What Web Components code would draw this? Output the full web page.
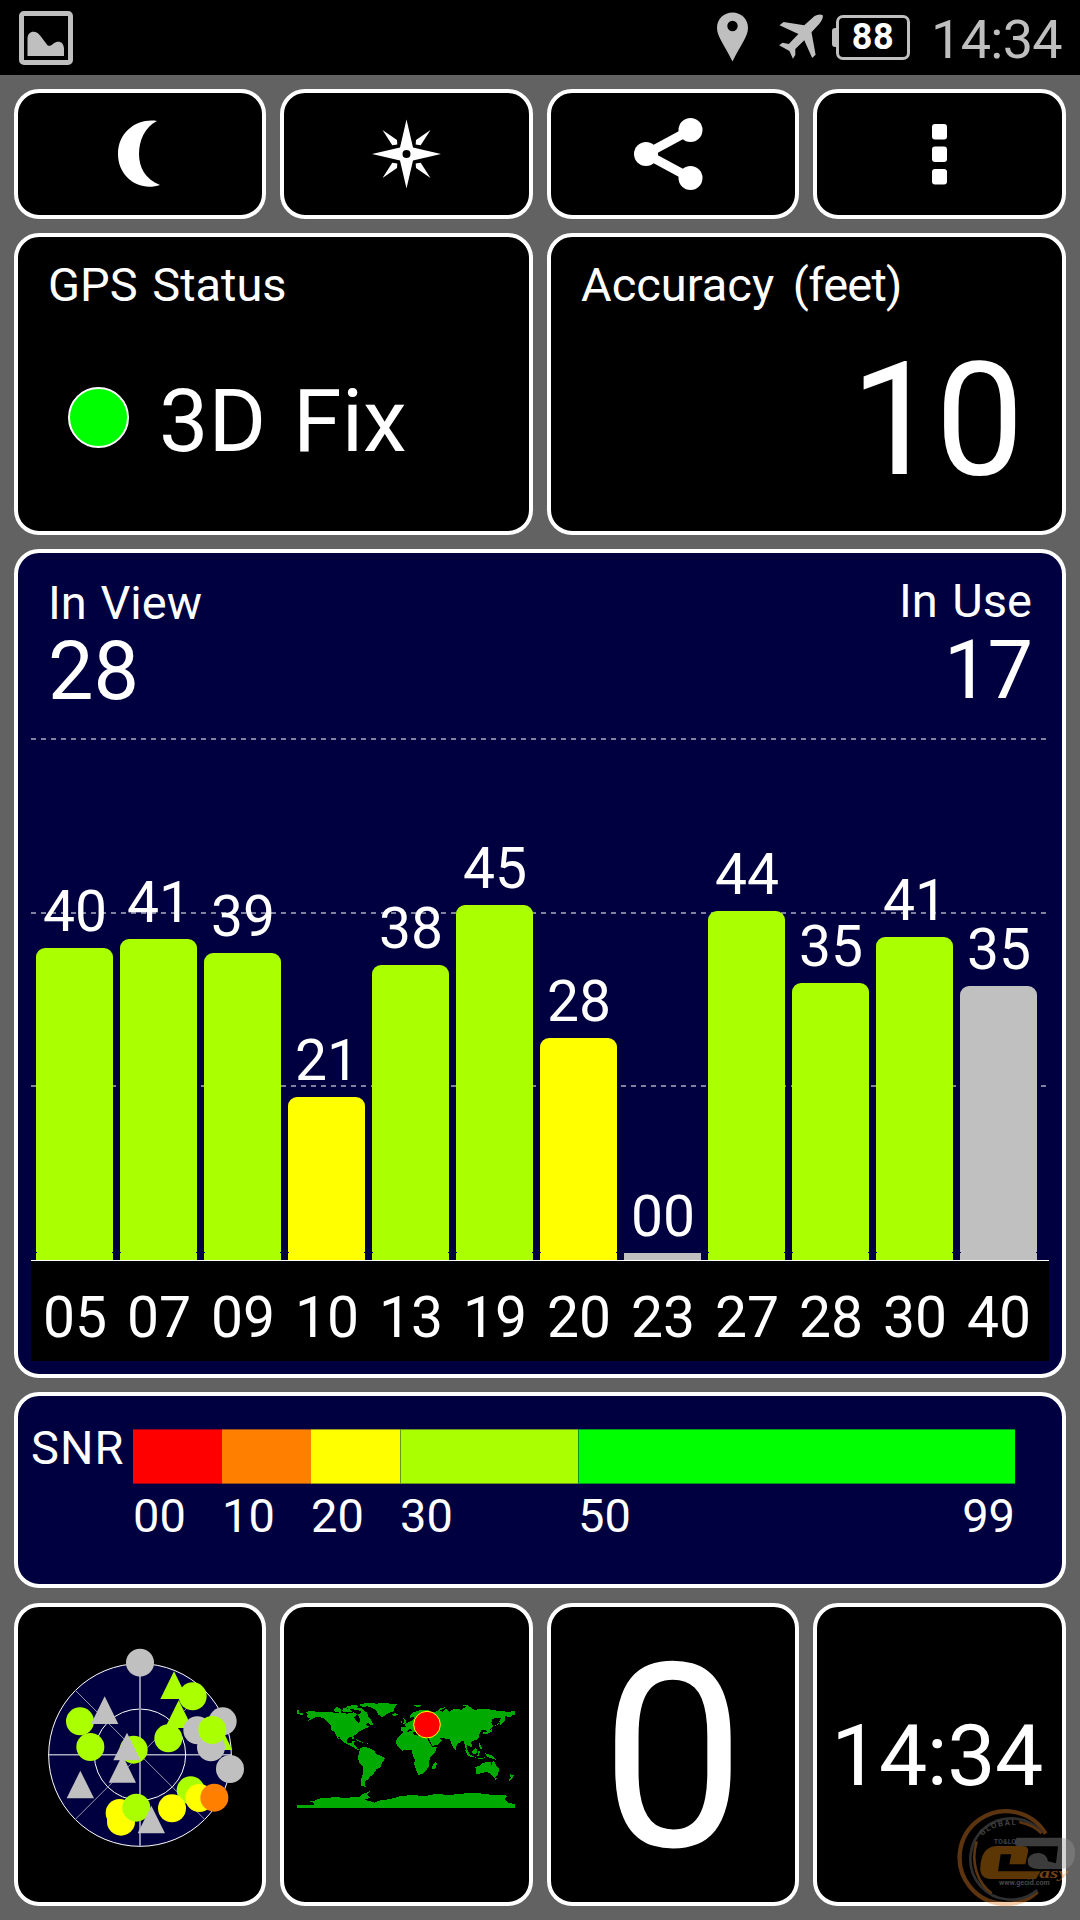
<!DOCTYPE html>
<html lang="en">
<head>
<meta charset="utf-8">
<title>GPS Test</title>
<style>
  body {
    margin: 0;
    width: 1080px;
    height: 1920px;
    overflow: hidden;
    background: #626262;
    color: #fff;
    font-family: Roboto, "Liberation Sans", sans-serif;
  }
</style>
</head>
<body>
<gps-app></gps-app>

<script>
class StatusBar extends HTMLElement {
  connectedCallback() {
    this.attachShadow({ mode: 'open' });
    this.shadowRoot.innerHTML = `
      <style>
        :host {
          display: flex;
          align-items: flex-start;
          height: 75px;
          box-sizing: border-box;
          padding: 11px 18px 0 19px;
          background: #000;
          color: #bfbfbf;
        }
        svg { display: block; }
        .spacer { flex: 1; }
        .pin { margin: 1px 27px 0 0; }
        .plane { margin: -1px 4px 0 0; }
        .battery {
          display: flex;
          align-items: center;
          margin-top: 4px;
        }
        .nub {
          width: 4px;
          height: 19px;
          margin-top: -1px;
          border-radius: 3px 0 0 3px;
          background: #bfbfbf;
        }
        .level {
          width: 74px;
          height: 45px;
          box-sizing: border-box;
          border: 3px solid #bfbfbf;
          border-radius: 7px;
          color: #fff;
          font-size: 36px;
          font-weight: 700;
          letter-spacing: .5px;
          line-height: 39px;
          text-align: center;
        }
        .time {
          margin-left: 21px;
          font-size: 54px;
          letter-spacing: -.7px;
          line-height: 54px;
          margin-top: 2px;
        }
      </style>
      <svg width="54" height="54" viewBox="0 0 54 54">
        <rect x="2.5" y="2.5" width="49" height="49" rx="2.5" fill="none" stroke="#bfbfbf" stroke-width="5"/>
        <path fill="#bfbfbf" d="M8.500 45V28c0-9 9-9 13-3l6 8c2 3 4 2 7-.5c4-3 10-2.500 10.500 5V45z"/>
      </svg>
      <div class="spacer"></div>
      <svg class="pin" width="31" height="50" viewBox="0 0 31 50">
        <path fill="#bfbfbf" fill-rule="evenodd" d="M15.500 .5C7 .5 0 7 0 15.800C0 25 7.500 33 15.500 49.500C23.500 33 31 25 31 15.800C31 7 24 .5 15.500 .5zM15.500 8.800a5.200 5.200 0 1 1 0 10.400a5.200 5.200 0 1 1 0-10.400z"/>
      </svg>
      <svg class="plane" width="53" height="52" viewBox="680 30 154 156" preserveAspectRatio="none">
        <path fill="#bfbfbf" d="M819 46q2 10-10 25l-23 26l12 67l-10 10l-23-53l-26 26l0 18l-7 11l-10-23l-30-17l10-8l18 4l28-30l-55-26l12-10l60 10l30-28q14-8 24-2z"/>
      </svg>
      <div class="battery"><div class="nub"></div><div class="level">88</div></div>
      <div class="time">14:34</div>
    `;
  }
}
customElements.define('status-bar', StatusBar);

class GpsPanel extends HTMLElement {
  connectedCallback() {
    this.attachShadow({ mode: 'open' });
    this.shadowRoot.innerHTML = `
      <style>
        :host {
          display: flex;
          flex-direction: column;
          min-width: 0;
          box-sizing: border-box;
          border: 4px solid #fff;
          border-radius: 25px;
          background: #000;
        }
        :host([navy]) { background: #000040; }
        :host([center]) {
          align-items: center;
          justify-content: center;
        }
      </style>
      <slot></slot>
    `;
  }
}
customElements.define('gps-panel', GpsPanel);

class ToolIcon extends HTMLElement {
  connectedCallback() {
    const icons = {
      moon: '<path d="M17-33C-2-36-22-23-22 0C-22 23-1 38 20 31C5 25-1 13-1 0C-1-14 5-27 17-33z"/>',
      compass: `
        <g transform="translate(-.5 0)">
          <path fill-rule="evenodd" d="M0-34.500L6.500-6.500L34.500 0L6.500 6.500L0 34.500L-6.500 6.500L-34.500 0L-6.500-6.500zM0-4a4 4 0 1 0 0 8a4 4 0 1 0 0-8z"/>
          <path d="M-24-24l14.500 10l.3 4.500l-5 .8zM24-24l-14.500 10l-.3 4.500l5 .8zM-24 24l14.500-10l.3-4.500l-5-.8zM24 24l-14.500-10l-.3-4.500l5-.8z"/>
        </g>`,
      share: `
        <path d="M17.500-24L-27 0L17.500 24" fill="none" stroke="#fff" stroke-width="9"/>
        <circle cx="-27" r="12"/><circle cx="17.500" cy="-24" r="12"/><circle cx="17.500" cy="24" r="12"/>`,
      menu: `
        <rect x="-8" y="-30" width="15" height="15.500" rx="3"/>
        <rect x="-8" y="-7.500" width="15" height="15.500" rx="3"/>
        <rect x="-8" y="15" width="15" height="15.500" rx="3"/>`
    };
    this.attachShadow({ mode: 'open' });
    this.shadowRoot.innerHTML = `
      <style>
        :host { display: block; }
        svg { display: block; }
      </style>
      <svg width="80" height="80" viewBox="-40 -40 80 80" fill="#fff">${icons[this.getAttribute('name')]}</svg>
    `;
  }
}
customElements.define('tool-icon', ToolIcon);

class SignalChart extends HTMLElement {
  connectedCallback() {
    const green = '#aaff00', yellow = '#ffff00', gray = '#c0c0c0';
    // id, signal, bar height, colour
    const sats = [
      ['05', '40', 312, green], ['07', '41', 321, green], ['09', '39', 307, green],
      ['10', '21', 163, yellow], ['13', '38', 295, green], ['19', '45', 355, green],
      ['20', '28', 222, yellow], ['23', '00', 7, gray], ['27', '44', 349, green],
      ['28', '35', 277, green], ['30', '41', 323, green], ['40', '35', 274, gray]
    ];
    this.attachShadow({ mode: 'open' });
    this.shadowRoot.innerHTML = `
      <style>
        :host {
          display: block;
          width: 1018px;
          font-size: 57px;
          line-height: 57px;
          text-align: center;
        }
        .plot, .ids {
          display: grid;
          grid-template-columns: repeat(12, 77px);
          column-gap: 7px;
          padding-left: 5px;
        }
        .plot {
          --dash: repeating-linear-gradient(90deg, #8080a0 0 5px, transparent 5px 10px);
          height: 522px;
          align-items: end;
          background:
            var(--dash) 0 0 / 1015px 2px no-repeat,
            var(--dash) 0 174px / 1015px 2px no-repeat,
            var(--dash) 0 347px / 1015px 2px no-repeat;
        }
        .value { margin-bottom: 8px; }
        .value, .ids span { padding-left: 1px; }
        .bar {
          border-radius: 9px 9px 0 0;
          display: flex;
          flex-direction: column;
          justify-content: flex-end;
        }
        .bar.empty { border-radius: 0; }
        .bar i {
          height: 1px;
          margin-bottom: 7px;
          border: solid #000040;
          border-width: 0 1px;
        }
        .bar.empty i { display: none; }
        .ids {
          height: 100px;
          box-sizing: border-box;
          padding-top: 28px;
          background: #000;
        }
        .axis { height: 1px; background: #fff; }
      </style>
      <div class="plot">
        ${sats.map(s => `
          <div class="col">
            <div class="value">${s[1]}</div>
            <div class="bar${s[1] === '00' ? ' empty' : ''}" style="height:${s[2]}px;background:${s[3]}"><i></i></div>
          </div>`).join('')}
      </div>
      <div class="axis"></div>
      <div class="ids">${sats.map(s => `<span>${s[0]}</span>`).join('')}</div>
    `;
  }
}
customElements.define('signal-chart', SignalChart);

class SnrScale extends HTMLElement {
  connectedCallback() {
    this.attachShadow({ mode: 'open' });
    this.shadowRoot.innerHTML = `
      <style>
        :host {
          display: grid;
          grid-template-columns: 102px 89px 89px 89px 178px 338px 99px;
          padding: 33px 0 0 13px;
          font-size: 47px;
          line-height: 47px;
        }
        .seg {
          height: 55px;
          box-sizing: border-box;
          border: solid rgba(0, 0, 64, .4);
          border-width: 1px 0 1px 0;
        }
        .green { border-left-width: 1px; }
        .name {
          margin-top: -5px;
          letter-spacing: 1px;
        }
        .num { padding-top: 8px; }
        .last { text-align: right; margin-left: -99px; }
      </style>
      <div class="name">SNR</div>
      <div class="seg" style="background:#f00"></div>
      <div class="seg" style="background:#ff8000"></div>
      <div class="seg" style="background:#ff0"></div>
      <div class="seg green" style="background:#af0"></div>
      <div class="seg green" style="background:#0f0;grid-column:span 2"></div>
      <div></div>
      <div class="num">00</div>
      <div class="num">10</div>
      <div class="num">20</div>
      <div class="num">30</div>
      <div class="num">50</div>
      <div class="num last">99</div>
    `;
  }
}
customElements.define('snr-scale', SnrScale);

class SkyView extends HTMLElement {
  connectedCallback() {
    const colors = { g: '#aaff00', y: '#ffff00', o: '#ff8000', x: '#c0c0c0' };
    // shape, colour, x, y: circles by centre, triangles by apex
    const marks = [
      ['c', 'x', 330, 187], ['t', 'g', 432, 213], ['c', 'g', 488, 288], ['t', 'g', 446, 300],
      ['c', 'g', 415, 414], ['c', 'g', 150, 363], ['c', 'g', 181, 440], ['t', 'x', 224, 288],
      ['c', 'g', 311, 448], ['t', 'x', 277, 464], ['t', 'x', 291, 397], ['t', 'x', 151, 511],
      ['c', 'x', 578, 363], ['t', 'g', 566, 366], ['c', 'x', 502, 390], ['c', 'x', 543, 441],
      ['c', 'g', 547, 389], ['c', 'x', 600, 506], ['c', 'g', 482, 570], ['c', 'y', 508, 593],
      ['c', 'o', 553, 592], ['c', 'y', 426, 624], ['c', 'y', 269, 638], ['c', 'y', 273, 664],
      ['c', 'g', 319, 622], ['t', 'x', 364, 616]
    ];
    const shapes = marks.map(([s, c, x, y]) => s === 'c'
      ? `<circle cx="${x}" cy="${y}" r="42" fill="${colors[c]}"/>`
      : `<path d="M${x} ${y}l41 83h-82z" fill="${colors[c]}"/>`).join('');
    this.attachShadow({ mode: 'open' });
    this.shadowRoot.innerHTML = `
      <style>
        :host { display: block; }
        svg { display: block; }
      </style>
      <svg width="230" height="220" viewBox="-15 134 690 660" fill="none">
        <circle cx="330" cy="464" r="274" fill="#000040" stroke="#fff" stroke-width="3"/>
        <circle cx="330" cy="463" r="137" stroke="#fff" stroke-width="3"/>
        <path d="M136 270L524 657M524 270L136 657" stroke="#9696ac" stroke-width="3"/>
        <path d="M330 190V738" stroke="#8c8ca8" stroke-width="6"/>
        <path d="M56 463.500H604" stroke="#fff" stroke-width="3"/>
        ${shapes}
      </svg>
    `;
  }
}
customElements.define('sky-view', SkyView);

class WorldMap extends HTMLElement {
  connectedCallback() {
    this.attachShadow({ mode: 'open' });
    this.shadowRoot.innerHTML = `
      <style>
        :host { display: block; margin-right: 1px; }
        svg { display: block; }
      </style>
      <svg width="218" height="106" viewBox="51 67 654 318">
        <g fill="#00aa00" shape-rendering="crispEdges">
          <path d="M51 92l5 0l2 7l10 2l0 4l-17-1zM78 97L90 94L120 97L150 96L165 100L180 98L200 102L222 98L232 104L222 112L226 122L236 132L241 124L238 112L234 105L250 93L260 98L266 112L272 118L280 136L272 138L264 130L256 134L268 142L256 146L243 152L232 160L220 170L224 179L218 178L214 171L205 174L200 182L203 190L213 191L218 183L225 184L220 196L228 198L232 207L240 208L234 212L222 204L208 196L196 191L186 184L178 172L174 172L180 184L172 176L164 158L154 150L152 136L140 124L128 114L108 112L98 118L82 124L92 116L80 112L84 104z"/>
          <path d="M160 90l10-8l14 6l-2 8l-18 0zM186 92l6-8l16 4l8 8l-24 2zM196 82l24-6l16 2l-6 6l-24 4zM214 88l10-6l20 4l10 10l10 8l-12-2l-16-10zM236 76l22-6l30 0l-16 8l-24 4z"/>
          <path d="M262 80L280 73L318 69L328 72L352 74L344 82L340 95L322 102L307 112L296 106L288 92L276 84zM336 102l12-1l6 3l-8 4l-8 0z"/>
          <path d="M225 178l12 4l10 6l-10-2zM246 188l10 2l-8 2zM262 190l6 4l-6-1z"/>
          <path d="M240 206L252 200L268 206L282 212L290 224L305 230L316 236L306 250L302 262L288 270L280 284L268 292L264 300L256 304L254 314L258 322L244 318L242 306L246 290L250 276L249 262L238 248L232 232L237 222z"/>
          <path d="M370 158L396 154L400 164L412 168L426 166L440 172L450 192L458 203L472 201L464 218L450 234L447 250L446 260L438 272L430 282L416 286L410 276L403 256L404 240L398 226L396 212L384 210L366 213L354 202L348 192L350 178L362 166zM466 246l5 6l-6 16l-7 2l-2-10z"/>
          <path d="M363 154L364 142L378 143L374 134L386 128L400 120L402 112L390 114L388 108L400 98L418 92L440 90L460 98L472 94L490 96L498 86L508 96L520 88L545 90L552 84L570 82L582 90L620 88L650 93L680 96L704 95L705 106L696 106L692 112L676 110L674 122L662 136L658 124L664 114L650 114L636 118L634 130L640 140L628 150L630 158L622 158L616 150L604 152L598 164L598 174L590 180L580 183L574 188L576 204L568 200L562 196L560 204L565 216L560 212L555 200L552 184L542 186L530 196L526 209L520 206L514 192L510 178L498 177L480 175L486 184L476 194L458 199L450 186L446 172L430 164L404 156L398 158L392 148L384 150L380 158z"/>
          <path d="M370 116l6 4l4 10l-12 4l4-8zM362 124l6 0l-4 7zM400 76l16-1l10 4l-12 4zM468 98l12-12l18-4l-16 10zM545 76l16 0l10 6l-16-2zM640 140l6-4l4-8l-2 12zM610 158l12-2l10-4l2-8l2 12l-12 6l-14 2zM650 134l8-6l-4 8zM670 122l3-2l-1 4z"/>
          <path d="M554 209l8 4l8 12l14 6l-4 2l-16-4zM576 214l12-10l4 8l-4 12l-10-2zM594 216l6-2l-4 16l-4-2zM596 188l4 4l4 10l6 8l-8-2l-4-8zM584 233l20 2l12-2l-14 6zM614 220l10 4l12 4l12 12l-14-4l-12-4zM526 202l3 7l-3 1z"/>
          <path d="M586 262L600 258L608 250L624 247L632 248L634 256L640 242L648 256L657 268L654 284L644 294L634 286L622 276L606 280L590 284zM644 296l6 0l-4 5zM690 284l12 4l-6 10l-12 8l8-12z"/>
          <path d="M51 375H102L100 368L84 364L102 364L120 356L160 353L200 354L240 352L248 344L272 333L262 344L271 354L254 360L284 369L300 362L332 358L358 350L384 347L440 348L474 342L505 347L540 342L590 340L630 345L686 348L672 358L686 370L705 373V384H51z"/>
        </g>
        <circle cx="441" cy="135" r="40" fill="#f00" stroke="#ffff00" stroke-width="3"/>
      </svg>
    `;
  }
}
customElements.define('world-map', WorldMap);

class SiteMark extends HTMLElement {
  connectedCallback() {
    this.attachShadow({ mode: 'open' });
    this.shadowRoot.innerHTML = `
      <style>
        :host {
          display: block;
          position: absolute;
          left: 950px;
          top: 1800px;
        }
        svg { display: block; }
      </style>
      <svg width="130" height="120" viewBox="0 0 390 360" fill="none">
        <g opacity=".4">
          <path d="M287 101A139 139 0 1 0 262 275" stroke="#e6822a" stroke-width="13"/>
          <path d="M276 98A122 122 0 1 0 262 270" stroke="#777" stroke-width="8"/>
          <path d="M208 66Q252 76 274 100M80 124C60 190 84 250 125 280" stroke="#e6822a" stroke-width="8"/>
          <path fill="#e6880e" fill-rule="evenodd" d="M139 138H215Q238 138 234 156L226 193H178L184 163H152L144 214H261L272 214L258 237H128Q88 237 91 202Q93 142 139 138z"/>
          <path fill="#969696" fill-rule="evenodd" d="M200 113H336Q375 118 375 158Q375 204 336 207H270Q233 208 233 183Q235 160 266 159Q290 160 294 184L318 190L324 139H204Q192 136 194 123z"/>
        </g>
        <path id="arc" d="M96 108Q138 68 216 76"/>
        <text fill="#404040" font-size="24" font-weight="700" letter-spacing="4"><textPath href="#arc">GLOBAL</textPath></text>
        <text x="131" y="133" fill="#3a3e48" font-size="19" font-weight="700" textLength="68" lengthAdjust="spacingAndGlyphs">TO&amp;LO</text>
        <text x="268" y="235" fill="#e6822a" fill-opacity=".5" font-size="46" font-weight="700" font-style="italic" font-family="Liberation Serif, serif" textLength="86" lengthAdjust="spacingAndGlyphs">asy</text>
        <text x="147" y="255" fill="#484848" font-size="20" font-weight="700" textLength="152" lengthAdjust="spacingAndGlyphs">www.gecid.com</text>
      </svg>
    `;
  }
}
customElements.define('site-mark', SiteMark);

class GpsApp extends HTMLElement {
  connectedCallback() {
    this.attachShadow({ mode: 'open' });
    this.shadowRoot.innerHTML = `
      <style>
        :host {
          display: block;
          position: relative;
          height: 1920px;
        }
        main {
          display: grid;
          grid-template-columns: 252px 253px 252px 253px;
          grid-template-rows: 130px 302px 829px 197px 303px;
          gap: 14px;
          padding: 14px 14px 0;
        }
        .half { grid-column: span 2; }
        .full { grid-column: span 4; }
        .snr { margin-bottom: 1px; }
        .label {
          font-size: 47px;
          line-height: 47px;
          margin: 24px 0 0 30px;
          word-spacing: 3px;
        }
        .label.wide { word-spacing: 7px; }
        .label span { letter-spacing: -.8px; }
        .fix {
          display: flex;
          align-items: flex-start;
          margin: 69px 0 0 50px;
          font-size: 88px;
          line-height: 88px;
          word-spacing: 5px;
        }
        .dot {
          width: 61px;
          height: 61px;
          box-sizing: border-box;
          margin: 10px 30px 0 0;
          border: 2px solid #fff;
          border-radius: 50%;
          background: #0f0;
        }
        .accuracy {
          font-size: 158px;
          letter-spacing: -4px;
          line-height: 158px;
          margin: 33px 42px 0 0;
          text-align: right;
        }
        .counts {
          display: flex;
          justify-content: space-between;
          height: 185px;
          box-sizing: border-box;
          padding: 26px 30px 0 30px;
        }
        .counts div {
          font-size: 47px;
          line-height: 47px;
          word-spacing: 2px;
        }
        .counts b {
          display: block;
          margin-top: 5px;
          font-size: 81px;
          font-weight: 400;
          line-height: 81px;
        }
        .counts .use {
          text-align: right;
          margin-top: -2px;
          word-spacing: 3px;
        }
        .counts .use b {
          margin: 6px 1px 0 0;
          letter-spacing: -2px;
        }
        signal-chart { margin-left: 13px; }
        .speed {
          font-size: 257px;
          line-height: 257px;
          margin-top: 7px;
        }
        .clock {
          font-size: 86px;
          letter-spacing: -.5px;
          line-height: 86px;
          margin-top: 2px;
          padding-right: 5px;
        }
      </style>
      <status-bar></status-bar>
      <main>
        <gps-panel center><tool-icon name="moon"></tool-icon></gps-panel>
        <gps-panel center><tool-icon name="compass"></tool-icon></gps-panel>
        <gps-panel center><tool-icon name="share"></tool-icon></gps-panel>
        <gps-panel center><tool-icon name="menu"></tool-icon></gps-panel>
        <gps-panel class="half">
          <div class="label">GPS Status</div>
          <div class="fix"><span class="dot"></span><span>3D Fix</span></div>
        </gps-panel>
        <gps-panel class="half">
          <div class="label wide">Accuracy <span>(feet)</span></div>
          <div class="accuracy">10</div>
        </gps-panel>
        <gps-panel class="full" navy>
          <div class="counts">
            <div>In View<b>28</b></div>
            <div class="use">In Use<b>17</b></div>
          </div>
          <signal-chart></signal-chart>
        </gps-panel>
        <gps-panel class="full snr" navy><snr-scale></snr-scale></gps-panel>
        <gps-panel center><sky-view></sky-view></gps-panel>
        <gps-panel center><world-map></world-map></gps-panel>
        <gps-panel center><div class="speed">0</div></gps-panel>
        <gps-panel center><div class="clock">14:34</div></gps-panel>
      </main>
      <site-mark></site-mark>
    `;
  }
}
customElements.define('gps-app', GpsApp);
</script>
</body>
</html>
